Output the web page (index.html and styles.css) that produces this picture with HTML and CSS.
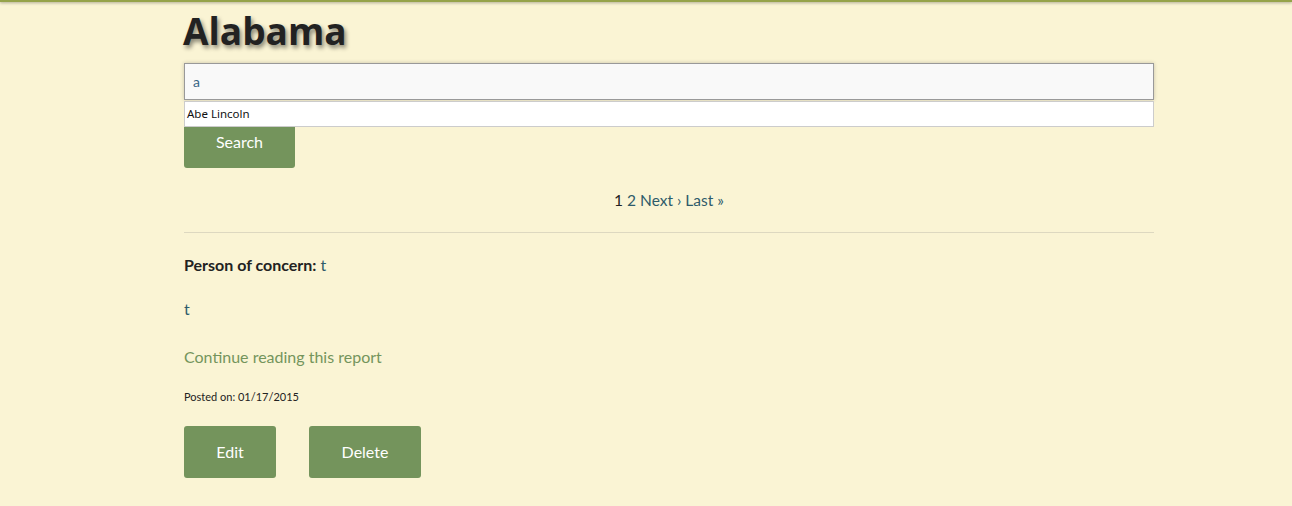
FILE: index.html
```html
<!DOCTYPE html>
<html>
<head>
<meta charset="utf-8">
<link rel="stylesheet" href="styles.css">
</head>
<body>
<div class="topbar"></div>
<main class="page">
  <h1 class="title">Alabama</h1>
  <form class="search">
    <div class="field">
      <input class="input" type="text" value="a">
      <ul class="suggest"><li>Abe Lincoln</li></ul>
    </div>
    <button class="btn btn-search" type="button">Search</button>
  </form>
  <nav class="pager">
    <span class="current">1</span> <a href="#">2</a> <a href="#">Next ›</a> <a href="#">Last »</a>
  </nav>
  <hr class="rule">
  <article class="report">
    <p class="concern"><strong>Person of concern:</strong> <a href="#">t</a></p>
    <p class="body"><a href="#">t</a></p>
    <p class="more"><a href="#">Continue reading this report</a></p>
    <p class="posted">Posted on: 01/17/2015</p>
    <div class="actions">
      <button class="btn btn-edit" type="button">Edit</button>
      <button class="btn btn-delete" type="button">Delete</button>
    </div>
  </article>
</main>
</body>
</html>
```
FILE: styles.css
```css
html, body {
  margin: 0;
  padding: 0;
}
body {
  background: #faf4d4;
  font-family: Lato, "Open Sans", sans-serif;
  color: #222;
  height: 506px;
  overflow: hidden;
}
.topbar {
  height: 2px;
  background: #95a34a;
  box-shadow: 0 1px 3px rgba(0,0,0,0.35);
}
.page {
  width: 970px;
  margin-left: 184px;
}
.title {
  font-family: "Open Sans", "DejaVu Sans", sans-serif;
  font-weight: 700;
  font-size: 37px;
  line-height: 42px;
  letter-spacing: 0;
  margin: 8px 0 0 -1px;
  color: #222;
  text-shadow: 2px 3px 4px rgba(0,0,0,0.45);
}
.search {
  margin-top: 11px;
}
.field {
  position: relative;
}
.input {
  box-sizing: border-box;
  display: block;
  width: 970px;
  height: 37px;
  margin: 0;
  padding: 0 8px;
  border: 1px solid #999;
  background: #f9f9f9;
  font-family: Lato, sans-serif;
  font-size: 14px;
  color: #3a6585;
  box-shadow: 0 0 4px rgba(0,0,0,0.2);
  outline: none;
}
.suggest {
  position: absolute;
  left: 0;
  top: 38px;
  box-sizing: border-box;
  width: 970px;
  height: 26px;
  margin: 0;
  padding: 0 2px;
  list-style: none;
  background: #fff;
  border: 1px solid #ccc;
  font-family: "Noto Sans", "Open Sans", sans-serif;
  font-size: 11.5px;
  line-height: 24px;
  color: #111;
  z-index: 2;
}
.btn {
  border: none;
  border-radius: 3px;
  background: #74945c;
  color: #fff;
  font-family: Lato, sans-serif;
  font-size: 16px;
  font-weight: 400;
  height: 52px;
  padding: 0 0 2px;
  cursor: pointer;
}
.btn-search {
  display: block;
  width: 111px;
  margin-top: 16px;
}
.pager {
  text-align: center;
  font-size: 15.5px;
  margin-top: 23px;
  line-height: 18px;
  color: #222;
}
.pager a {
  color: #2e5b6a;
  text-decoration: none;
}
.rule {
  border: none;
  border-top: 1px solid #ddd8c0;
  margin: 23px 0 0;
}
.report p {
  margin: 0;
}
.report a {
  text-decoration: none;
}
.concern {
  margin-top: 23px !important;
  font-size: 16px;
  line-height: 18px;
  color: #222;
}
.concern a, .body a {
  color: #2e5b6a;
}
.body {
  margin-top: 26px !important;
  font-size: 16px;
  line-height: 18px;
}
.more {
  margin-top: 30px !important;
  font-size: 16px;
  line-height: 18px;
}
.more a {
  color: #74945c;
}
.posted {
  margin-top: 24px !important;
  font-size: 11px;
  line-height: 14px;
  color: #222;
}
.actions {
  display: flex;
  gap: 33px;
  margin-top: 22px;
}
.btn-edit {
  width: 92px;
}
.btn-delete {
  width: 112px;
}
```
